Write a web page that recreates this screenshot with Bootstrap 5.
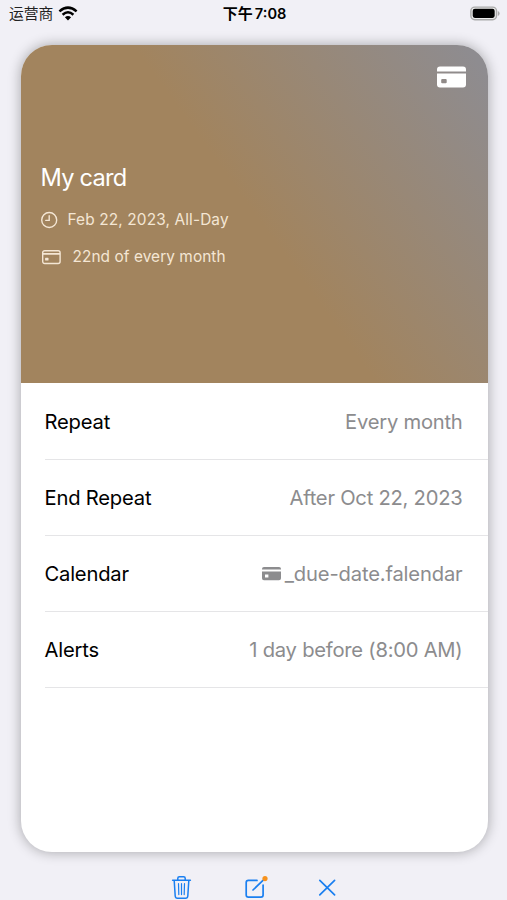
<!DOCTYPE html>
<html lang="en">
<head>
<meta charset="utf-8">
<meta name="viewport" content="width=device-width, initial-scale=1">
<title>My card</title>
<link href="https://cdn.jsdelivr.net/npm/bootstrap@5.3.0/dist/css/bootstrap.min.css" rel="stylesheet">
<style>
body{height:900px;background:#f1f0f6;font-family:Inter,"Liberation Sans","Noto Sans CJK SC",sans-serif;color:#000}
svg{display:block;flex:none}
.status-bar{height:45px;padding:4px 7px 0 9px;font-size:14px;line-height:18px}
.status-bar>div{height:18px}
.carrier{font-family:"Noto Sans CJK SC",sans-serif;font-size:14.8px;color:#222}
.wifi{margin-left:5px}
.clock{font-weight:600;font-size:14.6px}
.clock .cjk{font-family:"Noto Sans CJK SC",sans-serif;font-weight:700;font-size:15px;margin-right:-1.5px}
.event-card{width:467px;height:807px;margin-left:20.5px;border-radius:31px;box-shadow:0 0 13px rgba(0,0,0,.32)}
.hero{height:338px;padding:21px 22px 0 20px;background:linear-gradient(234.2deg,#8e8c90 0%,#8e8c90 3%,#a2845e 50%)}
.hero-title{font-size:23.6px;line-height:32px;margin-top:74px;letter-spacing:-.75px}
.hero-line{height:24px;font-size:15.4px;color:#f4e6d4}
.hero-date{margin-top:14px}
.hero-day{margin-top:13px}
.date-text{letter-spacing:.13px;margin-left:10px}
.day-text{letter-spacing:.07px}
.event-row{height:76px;margin-left:24px;padding:2px 25px 0 0;font-size:20.2px;letter-spacing:-.2px;box-shadow:0 1px 0 #e5e5e7}
.event-row span{white-space:nowrap}
.event-value{color:#8c8c8e;letter-spacing:-.24px}
.file-name{letter-spacing:-.16px}
.tools{padding:21px 0 0 168px;height:48px;color:#1a7ff0}
.edit-icon{margin-left:47px}
.close-icon{margin-left:45px}
</style>
<script src="https://cdn.jsdelivr.net/npm/bootstrap@5.3.0/dist/js/bootstrap.bundle.min.js"></script>
</head>
<body class="overflow-hidden">
<header class="status-bar row g-0 align-items-start">
  <div class="col d-flex align-items-center">
    <span class="carrier">运营商</span>
    <svg class="wifi" width="20" height="15" viewBox="0 0 20 15"><g fill="none" stroke="#000" stroke-width="2.5"><path d="M1.4 5.4Q10-2.2 18.6 5.4"/><path d="M4.6 8.7Q10 3.9 15.4 8.7"/></g><path d="M6.9 11.2Q10 8.7 13.1 11.2L10 14.4Z"/></svg>
  </div>
  <div class="col-auto clock"><span class="cjk">下午</span> 7:08</div>
  <div class="col d-flex align-items-center justify-content-end">
    <svg width="30" height="15" viewBox="0 0 31 15"><rect x=".9" y=".9" width="26.5" height="13" rx="4" fill="#eee" stroke="#aaa" stroke-width="1.5"/><rect x="2.8" y="2.7" width="22.7" height="9.4" rx="2.2"/><path d="M28.8 5v5q1.8-.7 1.8-2.5T28.8 5Z" fill="#aaa"/></svg>
  </div>
</header>
<main class="event-card bg-white overflow-hidden">
  <section class="hero text-white">
    <div class="d-flex justify-content-end">
      <svg width="29" height="22" viewBox="0 0 29 22" fill="#fff"><path d="M0 5.5V3.5Q0 .5 3 .5H26Q29 .5 29 3.5V5.5Z"/><path fill-rule="evenodd" d="M0 7.6H29V18.5Q29 21.5 26 21.5H3Q0 21.5 0 18.5ZM5.2 13Q4.2 13 4.2 14V16.3Q4.2 17.3 5.2 17.3H8.7Q9.7 17.3 9.7 16.3V14Q9.7 13 8.7 13Z"/></svg>
    </div>
    <div class="hero-title">My card</div>
    <div class="hero-line hero-date d-flex align-items-center">
      <svg width="17" height="18" viewBox="0 0 17 18" fill="none" stroke="currentColor" stroke-width="1.4" stroke-linecap="round"><circle cx="8.2" cy="9" r="7.5"/><path d="M8.2 4.7V9.4H4.8"/></svg>
      <span class="date-text">Feb 22, 2023, All-Day</span>
    </div>
    <div class="hero-line hero-day d-flex align-items-center">
      <svg width="20" height="16" viewBox="0 0 20 16" fill="none" stroke="currentColor" stroke-width="1.4"><rect x="1.7" y="1.7" width="17.4" height="12.8" rx="2"/><path d="M1.7 4.9H19.1" stroke-width="1.6"/><rect x="4.1" y="8.8" width="3.4" height="2.8" rx=".6" fill="currentColor" stroke="none"/></svg>
      <span class="day-text ms-2 ps-1">22nd of every month</span>
    </div>
  </section>
  <section>
    <div class="event-row d-flex align-items-center justify-content-between"><span>Repeat</span><span class="event-value">Every month</span></div>
    <div class="event-row d-flex align-items-center justify-content-between"><span>End Repeat</span><span class="event-value">After Oct 22, 2023</span></div>
    <div class="event-row d-flex align-items-center justify-content-between"><span>Calendar</span>
      <span class="event-value d-flex align-items-center gap-1">
        <svg width="19" height="15" viewBox="0 0 19 15" fill="currentColor"><path d="M0 3.6V3Q0 1 2 1H17Q19 1 19 3V3.6Z"/><path fill-rule="evenodd" d="M0 5.4H19V12.3Q19 14.3 17 14.3H2Q0 14.3 0 12.3ZM3 8.5V11.5H6.4V8.5Z"/></svg>
        <span class="file-name">_due-date.falendar</span>
      </span></div>
    <div class="event-row d-flex align-items-center justify-content-between"><span>Alerts</span><span class="event-value">1 day before (8:00 AM)</span></div>
  </section>
</main>
<footer class="tools d-flex align-items-start">
  <svg width="27" height="27" viewBox="0 0 27 27" fill="none" stroke="currentColor" stroke-width="1.5" stroke-linecap="round" stroke-linejoin="round"><path d="M4.6 7.3H22.4M6.2 7.5L7.2 23Q7.4 25.2 9.4 25.2H17.6Q19.6 25.2 19.8 23L20.8 7.5M9.8 7V5.3Q9.8 3.7 11.4 3.7H15.6Q17.2 3.7 17.2 5.3V7"/><path d="M10.5 10.7L10.8 21.6M13.5 10.7V21.6M16.5 10.7L16.2 21.6" stroke-width="1.2"/></svg>
  <svg class="edit-icon" width="27" height="27" viewBox="0 0 27 27" fill="none" stroke="currentColor" stroke-width="1.7" stroke-linecap="round"><path d="M15 7.4H6.4Q4.2 7.4 4.2 9.6V22Q4.2 24.2 6.4 24.2H18.9Q21.1 24.2 21.1 22V12"/><path d="M11 17L21 7.4"/><circle cx="23" cy="5.6" r="2.6" fill="#f7921e" stroke="none"/></svg>
  <svg class="close-icon" width="27" height="27" viewBox="0 0 27 27" fill="none" stroke="currentColor" stroke-width="1.7" stroke-linecap="round"><path d="M5.8 7.3L20.6 21.9M20.6 7.3L5.8 21.9"/></svg>
</footer>
</body>
</html>
